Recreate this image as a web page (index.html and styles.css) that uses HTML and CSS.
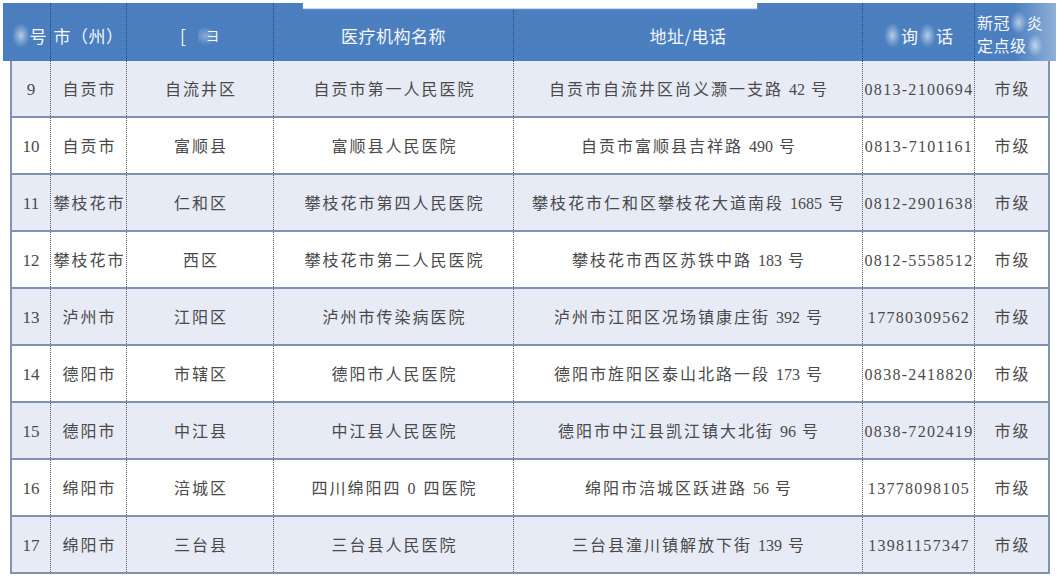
FILE: index.html
```html
<!DOCTYPE html>
<html lang="zh-CN">
<head>
<meta charset="utf-8">
<title>定点医疗机构</title>
<link rel="stylesheet" href="styles.css">
</head>
<body>
<div class="page">
  <div class="notch"></div>
  <div class="head">
    <div class="hc c1"><span class="blob">序</span>号</div>
    <div class="hc">市（州）</div>
    <div class="hc"><span class="frag">[</span><span class="frag f2">ヨ</span></div>
    <div class="hc">医疗机构名称</div>
    <div class="hc">地址/电话</div>
    <div class="hc"><span class="blob">咨</span>询<span class="blob">电</span>话</div>
    <div class="hc last"><div>新冠<span class="blob">肺</span>炎</div><div>定点级<span class="blob">别</span></div></div>
  </div>
  <div class="table">
    <div class="row shade">
      <div class="c num">9</div><div class="c">自贡市</div><div class="c">自流井区</div><div class="c">自贡市第一人民医院</div><div class="c">自贡市自流井区尚义灏一支路 <span class="n">42</span> 号</div><div class="c tel">0813-2100694</div><div class="c">市级</div>
    </div>
    <div class="row">
      <div class="c num">10</div><div class="c">自贡市</div><div class="c">富顺县</div><div class="c">富顺县人民医院</div><div class="c">自贡市富顺县吉祥路 <span class="n">490</span> 号</div><div class="c tel">0813-7101161</div><div class="c">市级</div>
    </div>
    <div class="row shade">
      <div class="c num">11</div><div class="c">攀枝花市</div><div class="c">仁和区</div><div class="c">攀枝花市第四人民医院</div><div class="c">攀枝花市仁和区攀枝花大道南段 <span class="n">1685</span> 号</div><div class="c tel">0812-2901638</div><div class="c">市级</div>
    </div>
    <div class="row">
      <div class="c num">12</div><div class="c">攀枝花市</div><div class="c">西区</div><div class="c">攀枝花市第二人民医院</div><div class="c">攀枝花市西区苏铁中路 <span class="n">183</span> 号</div><div class="c tel">0812-5558512</div><div class="c">市级</div>
    </div>
    <div class="row shade">
      <div class="c num">13</div><div class="c">泸州市</div><div class="c">江阳区</div><div class="c">泸州市传染病医院</div><div class="c">泸州市江阳区况场镇康庄街 <span class="n">392</span> 号</div><div class="c tel">17780309562</div><div class="c">市级</div>
    </div>
    <div class="row">
      <div class="c num">14</div><div class="c">德阳市</div><div class="c">市辖区</div><div class="c">德阳市人民医院</div><div class="c">德阳市旌阳区泰山北路一段 <span class="n">173</span> 号</div><div class="c tel">0838-2418820</div><div class="c">市级</div>
    </div>
    <div class="row shade">
      <div class="c num">15</div><div class="c">德阳市</div><div class="c">中江县</div><div class="c">中江县人民医院</div><div class="c">德阳市中江县凯江镇大北街 <span class="n">96</span> 号</div><div class="c tel">0838-7202419</div><div class="c">市级</div>
    </div>
    <div class="row">
      <div class="c num">16</div><div class="c">绵阳市</div><div class="c">涪城区</div><div class="c">四川绵阳四 0 四医院</div><div class="c">绵阳市涪城区跃进路 <span class="n">56</span> 号</div><div class="c tel">13778098105</div><div class="c">市级</div>
    </div>
    <div class="row shade">
      <div class="c num">17</div><div class="c">绵阳市</div><div class="c">三台县</div><div class="c">三台县人民医院</div><div class="c">三台县潼川镇解放下街 <span class="n">139</span> 号</div><div class="c tel">13981157347</div><div class="c">市级</div>
    </div>
  </div>
</div>
</body>
</html>
```

FILE: styles.css
```css
* { box-sizing: border-box; }
html, body { margin: 0; padding: 0; background: #ffffff; }
.page {
  position: relative;
  width: 1061px;
  height: 584px;
  padding-top: 3px;
  overflow: hidden;
}
.notch {
  position: absolute;
  left: 303px;
  top: 0;
  width: 454px;
  height: 8px;
  background: #ffffff;
  box-shadow: 0 1px 1px rgba(255,255,255,0.7);
}
.head {
  margin-left: 3px;
  width: 1053px;
  height: 58px;
  background: linear-gradient(to right, #4a7ebf 0, #4b7fbf 96%, #8fb0d8 100%);
  display: grid;
  grid-template-columns: 47px 76px 147px 240px 349px 112px 82px;
  font-family: "Noto Sans CJK SC", "Noto Sans", sans-serif;
  color: #f4f7fc;
  font-size: 17px;
  letter-spacing: 0.5px;
}
.hc {
  display: flex;
  align-items: center;
  justify-content: center;
  padding-top: 6px;
  white-space: nowrap;
  border-left: 1px dotted rgba(25, 45, 85, 0.7);
}
.hc.c1 { border-left: none; padding-left: 6px; }
.hc.last {
  flex-direction: column;
  align-items: flex-start;
  justify-content: center;
  padding-top: 3px;
  padding-left: 2px;
  font-size: 16px;
  line-height: 23px;
}
.blob {
  display: inline-block;
  color: transparent;
  background: radial-gradient(ellipse at center, rgba(255,255,255,0.6) 0, rgba(240,245,252,0.3) 35%, rgba(255,255,255,0) 70%);
}
.frag {
  display: inline-block;
  width: 18px;
  text-align: left;
}
.f2 {
  font-size: 14px;
  width: 22px;
  text-align: right;
  background: radial-gradient(ellipse at 35% 55%, rgba(255,255,255,0.35) 0, rgba(255,255,255,0) 60%);
}
.table {
  margin-left: 10px;
  width: 1040px;
  border-left: 2px solid #8193b0;
  border-right: 2px solid #8193b0;
}
.row {
  display: grid;
  grid-template-columns: 38px 76px 147px 240px 349px 112px 74px;
  height: 57px;
  border-bottom: 2px solid #7f92b0;
  background: #ffffff;
}
.row.shade { background: #e7ebf5; }
.c {
  display: block;
  text-align: center;
  line-height: 57px;
  white-space: nowrap;
  overflow: hidden;
  border-left: 1px dotted #5a5a5a;
  font-family: "Liberation Serif", "Noto Sans CJK SC", serif;
  font-size: 16px;
  letter-spacing: 2px;
  color: #4a4a4a;
  padding-left: 2px;
}
.c.num { border-left: none; letter-spacing: 0; padding-left: 0; font-size: 17px; }
.c.tel { letter-spacing: 1.3px; padding-left: 1px; }
.n { letter-spacing: 0; }
```
